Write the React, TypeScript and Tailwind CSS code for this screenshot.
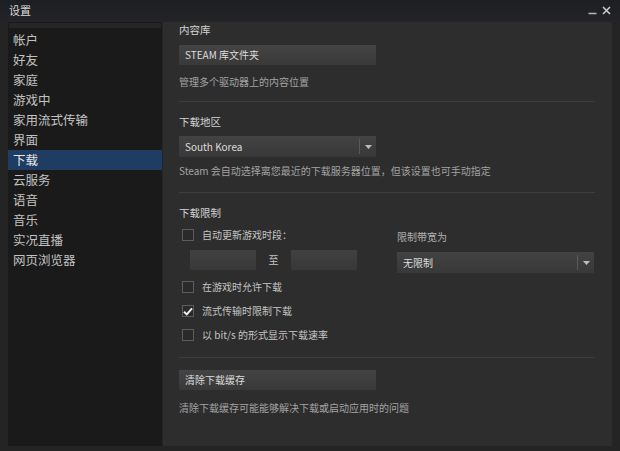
const navItems = [
  "帐户",
  "好友",
  "家庭",
  "游戏中",
  "家用流式传输",
  "界面",
  "下载",
  "云服务",
  "语音",
  "音乐",
  "实况直播",
  "网页浏览器",
];

const font = { fontFamily: '"Noto Sans CJK SC", "Liberation Sans", sans-serif' };

function Checkbox({ checked = false }: { checked?: boolean }) {
  return (
    <div className="w-[12px] h-[12px] border border-[#5c5c5c] bg-[#2a2a2a] flex items-center justify-center shrink-0">
      {checked && (
        <svg width="10" height="9" viewBox="0 0 10 9">
          <path d="M1 4.8 L3.8 7.4 L9 1.4" stroke="#f0f0f0" strokeWidth="2" fill="none" />
        </svg>
      )}
    </div>
  );
}

function Dropdown({ label }: { label: string }) {
  return (
    <div className="w-[197px] h-[21px] bg-gradient-to-b from-[#434343] to-[#383838] flex items-center">
      <span className="flex-1 pl-[6px] text-[10px] text-[#dcdcdc] leading-[14px]">{label}</span>
      <div className="w-[1px] h-[15px] bg-[#5a5a5a]" />
      <div className="w-[16px] flex items-center justify-center">
        <svg width="7" height="4" viewBox="0 0 7 4">
          <path d="M0 0 L7 0 L3.5 4 Z" fill="#bdbdbd" />
        </svg>
      </div>
    </div>
  );
}

function Button({ label }: { label: string }) {
  return (
    <div className="w-[197px] h-[20px] bg-gradient-to-b from-[#444444] to-[#393939] flex items-center pl-[6px]">
      <span className="text-[10px] text-[#dcdcdc] leading-[14px]">{label}</span>
    </div>
  );
}

function Heading({ children, className = "" }: { children: string; className?: string }) {
  return <div className={`text-[10.5px] leading-[14px] text-[#d2d2d2] ${className}`}>{children}</div>;
}

function Desc({ children, className = "" }: { children: string; className?: string }) {
  return <div className={`text-[10px] leading-[14px] text-[#a3a3a3] ${className}`}>{children}</div>;
}

function CheckRow({ label, checked = false, className = "" }: { label: string; checked?: boolean; className?: string }) {
  return (
    <div className={`flex items-center h-[14px] pl-[3px] gap-[8px] ${className}`}>
      <Checkbox checked={checked} />
      <span className="text-[10px] leading-[14px] text-[#c4c4c4]">{label}</span>
    </div>
  );
}

export default function App() {
  return (
    <div className="w-[620px] h-[451px] bg-[#242424] flex flex-col overflow-hidden" style={font}>
      {/* Title bar */}
      <div className="h-[20px] bg-gradient-to-b from-[#1d1f23] to-[#222326] flex items-center justify-between pl-[9px] pr-[9px]">
        <span className="text-[11px] text-[#d8d8d8] leading-[14px]">设置</span>
        <div className="flex items-center gap-[5px]">
          <svg width="9" height="9" viewBox="0 0 9 9">
            <path d="M0.5 7.5 H8.5" stroke="#b8b8b8" strokeWidth="1.5" />
          </svg>
          <svg width="9" height="9" viewBox="0 0 9 9">
            <path d="M1 1 L8 8 M8 1 L1 8" stroke="#cfcfcf" strokeWidth="1.5" />
          </svg>
        </div>
      </div>

      {/* Body */}
      <div className="flex flex-1 pt-[2px] pb-[5px] pl-[8px] pr-[8px]">
        {/* Sidebar */}
        <div className="w-[154px] bg-[#1a1a1a] flex flex-col">
          <div className="h-[5px] bg-[#262626] mt-[1px] mx-[1px]" />
          <div className="mt-[2px]">
            {navItems.map((item) => (
              <div
                key={item}
                className={`h-[20px] flex items-center pl-[5px] text-[12.5px] leading-[16px] ${
                  item === "下载" ? "bg-[#1f3d62] text-[#e8e8e8]" : "text-[#c2c2c2]"
                }`}
              >
                {item}
              </div>
            ))}
          </div>
        </div>

        {/* Content */}
        <div className="flex-1 ml-[1px] bg-[#2d2d2d] pl-[16px] pr-[17px] pt-[1px] flex flex-col">
          <Heading>内容库</Heading>
          <div className="mt-[8px]">
            <Button label="STEAM 库文件夹" />
          </div>
          <Desc className="mt-[10px]">管理多个驱动器上的内容位置</Desc>
          <div className="mt-[12px] h-[1px] bg-[#3e3e3e]" />

          <Heading className="mt-[13px]">下载地区</Heading>
          <div className="mt-[7px]">
            <Dropdown label="South Korea" />
          </div>
          <Desc className="mt-[7px]">Steam 会自动选择离您最近的下载服务器位置，但该设置也可手动指定</Desc>
          <div className="mt-[14px] h-[1px] bg-[#3e3e3e]" />

          <Heading className="mt-[13px]">下载限制</Heading>
          <div className="flex items-start mt-[8px]">
            <div className="w-[218px] flex flex-col">
              <CheckRow label="自动更新游戏时段：" />
              <div className="flex items-center mt-[8px] pl-[11px]">
                <div className="w-[66px] h-[20px] bg-gradient-to-b from-[#414141] to-[#383838]" />
                <span className="w-[35px] text-center text-[10px] leading-[14px] text-[#c4c4c4]">至</span>
                <div className="w-[66px] h-[20px] bg-gradient-to-b from-[#414141] to-[#383838]" />
              </div>
            </div>
            <div className="flex flex-col pt-[2px]">
              <Desc className="text-[#b0b0b0]">限制带宽为</Desc>
              <div className="mt-[8px]">
                <Dropdown label="无限制" />
              </div>
            </div>
          </div>
          <CheckRow className="mt-[7px]" label="在游戏时允许下载" />
          <CheckRow className="mt-[10px]" label="流式传输时限制下载" checked />
          <CheckRow className="mt-[10px]" label="以 bit/s 的形式显示下载速率" />
          <div className="mt-[15px] h-[1px] bg-[#3e3e3e]" />

          <div className="mt-[12px]">
            <Button label="清除下载缓存" />
          </div>
          <Desc className="mt-[11px]">清除下载缓存可能能够解决下载或启动应用时的问题</Desc>
        </div>
      </div>
    </div>
  );
}
